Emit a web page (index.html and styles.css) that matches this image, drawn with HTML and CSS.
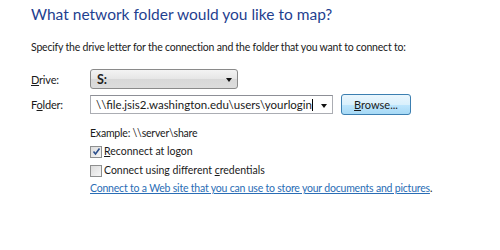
FILE: index.html
```html
<!DOCTYPE html>
<html lang="en">
<head>
    <meta charset="UTF-8">
    <title>Map Network Drive</title>
    <link rel="stylesheet" href="styles.css">
</head>
<body>

<div class="page">
    <h1 class="title">What network folder would you like to map?</h1>
    <p class="intro">Specify the drive letter for the connection and the folder that you want to connect to:</p>

    <!-- Drive and folder fields -->
    <div class="form">
        <label class="label"><u>D</u>rive:</label>
        <div class="combo drive">
            <span class="combo-value">S:</span>
            <span class="arrow"></span>
        </div>

        <label class="label">F<u>o</u>lder:</label>
        <div class="folder-row">
            <div class="combo folder">
                <span class="combo-value">\\file.jsis2.washington.edu\users\yourlogin<span class="caret"></span></span>
                <span class="arrow"></span>
            </div>
            <button class="browse"><u>B</u>rowse...</button>
        </div>
    </div>

    <div class="options">
        <p class="example">Example: \\server\share</p>
        <label class="check"><span class="box checked">
            <svg width="9" height="9" viewBox="0 0 9 9"><path d="M1.5 4.5 L3.5 7 L7.5 1.5" fill="none" stroke="#2c4f8c" stroke-width="1.6"/></svg>
        </span><span><u>R</u>econnect at logon</span></label>
        <label class="check"><span class="box"></span><span>Connect using different <u>c</u>redentials</span></label>
        <p class="link-line"><a href="#" class="link">Connect to a Web site that you can use to store your documents and pictures</a>.</p>
    </div>
</div>

</body>
</html>
```

FILE: styles.css
```css
/* Map network drive wizard page */
body {
    margin: 0;
    background: #fff;
    font-family: Lato, "Noto Sans", sans-serif;
    font-size: 10.5px;
    letter-spacing: -0.2px;
    color: #1a1a1a;
}
.page {
    padding: 4px 0 0 31px;
}
.title {
    margin: 0;
    font-size: 15.5px;
    font-weight: normal;
    letter-spacing: 0;
    color: #1f3f8f;
    line-height: 20px;
}
.intro {
    margin: 15px 0 0 0;
    line-height: 16px;
}
.form {
    display: grid;
    grid-template-columns: 59px auto;
    row-gap: 5px;
    align-items: center;
    margin-top: 14px;
    font-size: 11px;
}
.label u, .check u, .browse u {
    text-decoration: underline;
}
.combo {
    position: relative;
    box-sizing: border-box;
    height: 20px;
    display: flex;
    align-items: center;
    padding-left: 6px;
}
.drive {
    width: 148px;
    border: 1px solid #8a8a8a;
    border-radius: 3px;
    background: linear-gradient(#f3f3f3, #e6e6e6 50%, #d8d8d8 51%, #dcdcdc);
}
.drive .combo-value {
    font-size: 12.5px;
    font-weight: bold;
    color: #222;
}
.arrow {
    position: absolute;
    right: 5px;
    top: 8px;
    border-left: 3px solid transparent;
    border-right: 3px solid transparent;
    border-top: 4px solid #111;
}
.folder-row {
    display: flex;
    align-items: center;
    gap: 8px;
}
.folder {
    width: 243px;
    height: 19px;
    border: 1px solid #abadb3;
    border-top-color: #8d8f96;
    background: #fff;
    padding-left: 5px;
    font-size: 11.5px;
    letter-spacing: 0;
}
.caret {
    display: inline-block;
    width: 1px;
    height: 12px;
    background: #000;
    vertical-align: -2px;
}
.browse {
    width: 70px;
    height: 21px;
    border: 1px solid #3c7fb1;
    border-radius: 3px;
    background: linear-gradient(#eaf6fd, #d9f0fc 50%, #bee6fd 51%, #a7d9f5);
    font-family: inherit;
    font-size: 11px;
    color: #1a1a1a;
    padding: 0;
}
.options {
    margin-left: 59px;
    margin-top: 11px;
    display: flex;
    flex-direction: column;
    gap: 2px;
}
.example {
    margin: 0;
    line-height: 15px;
}
.check {
    display: flex;
    align-items: center;
    gap: 2px;
    line-height: 17px;
    font-size: 10.5px;
    letter-spacing: 0;
}
.box {
    box-sizing: border-box;
    width: 12px;
    height: 12px;
    border: 1px solid #8e8f8f;
    background: linear-gradient(135deg, #dcdcdc, #f6f6f6);
    display: flex;
    align-items: center;
    justify-content: center;
}
.link-line {
    margin: 0;
    line-height: 15px;
}
.link {
    color: #2a6db5;
    text-decoration: underline;
}
```
